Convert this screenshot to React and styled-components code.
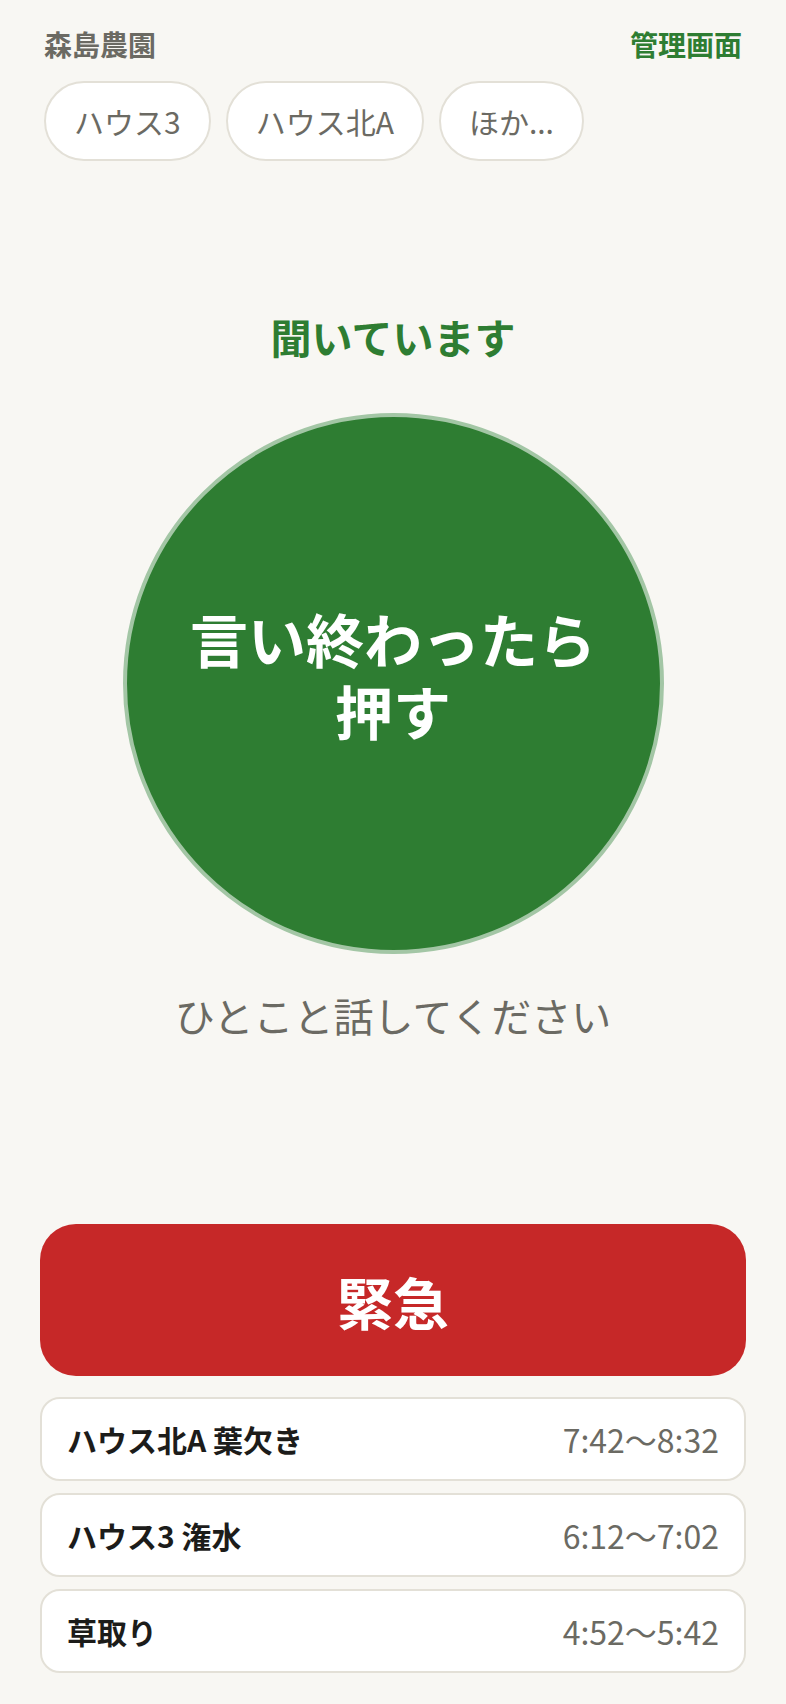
import React from "react";
import styled, { createGlobalStyle } from "styled-components";

const GlobalStyle = createGlobalStyle`
  body {
    margin: 0;
    background: #f8f7f3;
    font-family: "Noto Sans CJK JP", "Noto Sans", sans-serif;
  }
`;

const Page = styled.div`
  display: flex;
  flex-direction: column;
  padding: 24px 40px 28px;
`;

const Header = styled.header`
  display: flex;
  justify-content: space-between;
  align-items: center;
  height: 40px;
  padding: 0 4px;
`;

const Brand = styled.div`
  font-size: 28px;
  font-weight: 700;
  color: #6b6a63;
`;

const AdminLink = styled.a`
  font-size: 28px;
  font-weight: 700;
  color: #2e7d32;
  text-decoration: none;
`;

const ChipRow = styled.div`
  display: flex;
  gap: 15px;
  margin-top: 17px;
  padding: 0 4px;
`;

const Chip = styled.button`
  display: flex;
  align-items: center;
  box-sizing: border-box;
  height: 80px;
  padding: 0 28px;
  border: 2px solid #e3e0d7;
  border-radius: 40px;
  background: #fff;
  font-family: inherit;
  font-size: 30px;
  color: #6b6a63;
`;

const Status = styled.div`
  margin-top: 151px;
  font-size: 41px;
  line-height: 48px;
  font-weight: 700;
  color: #2e7d32;
  text-align: center;
`;

const RecordButton = styled.button`
  display: flex;
  flex-direction: column;
  align-items: center;
  justify-content: center;
  box-sizing: border-box;
  width: 541px;
  height: 541px;
  margin: 53px auto 0;
  padding: 0 0 20px;
  border: 4px solid #a3c6a5;
  border-radius: 50%;
  background: #2e7d32;
  font-family: inherit;
  font-size: 58px;
  line-height: 72px;
  font-weight: 700;
  color: #fff;
  text-align: center;
`;

const Line = styled.span`
  display: block;
`;

const Hint = styled.div`
  margin-top: 37px;
  font-size: 40px;
  line-height: 48px;
  color: #6b6a63;
  text-align: center;
`;

const EmergencyButton = styled.button`
  margin-top: 185px;
  height: 152px;
  border: none;
  border-radius: 36px;
  background: #c62828;
  font-family: inherit;
  font-size: 56px;
  font-weight: 700;
  color: #fff;
`;

const TaskList = styled.ul`
  display: flex;
  flex-direction: column;
  gap: 12px;
  margin: 21px 0 0;
  padding: 0;
  list-style: none;
`;

const TaskItem = styled.li`
  display: flex;
  justify-content: space-between;
  align-items: center;
  box-sizing: border-box;
  height: 84px;
  padding: 0 25px;
  border: 2px solid #e3e0d7;
  border-radius: 20px;
  background: #fff;
`;

const TaskName = styled.span`
  font-size: 30px;
  font-weight: 600;
  color: #1c1c1a;
`;

const TaskTime = styled.span`
  font-size: 32px;
  color: #6b6a63;
`;

const houses = ["ハウス3", "ハウス北A", "ほか..."];

const tasks = [
  { name: "ハウス北A 葉欠き", time: "7:42〜8:32" },
  { name: "ハウス3 潅水", time: "6:12〜7:02" },
  { name: "草取り", time: "4:52〜5:42" },
];

export default function App() {
  return (
    <>
      <GlobalStyle />
      <Page>
        <Header>
          <Brand>森島農園</Brand>
          <AdminLink href="#">管理画面</AdminLink>
        </Header>
        <ChipRow>
          {houses.map((h) => (
            <Chip key={h}>{h}</Chip>
          ))}
        </ChipRow>
        <Status>聞いています</Status>
        <RecordButton>
          <Line>言い終わったら</Line>
          <Line>押す</Line>
        </RecordButton>
        <Hint>ひとこと話してください</Hint>
        <EmergencyButton>緊急</EmergencyButton>
        <TaskList>
          {tasks.map((t) => (
            <TaskItem key={t.name}>
              <TaskName>{t.name}</TaskName>
              <TaskTime>{t.time}</TaskTime>
            </TaskItem>
          ))}
        </TaskList>
      </Page>
    </>
  );
}
